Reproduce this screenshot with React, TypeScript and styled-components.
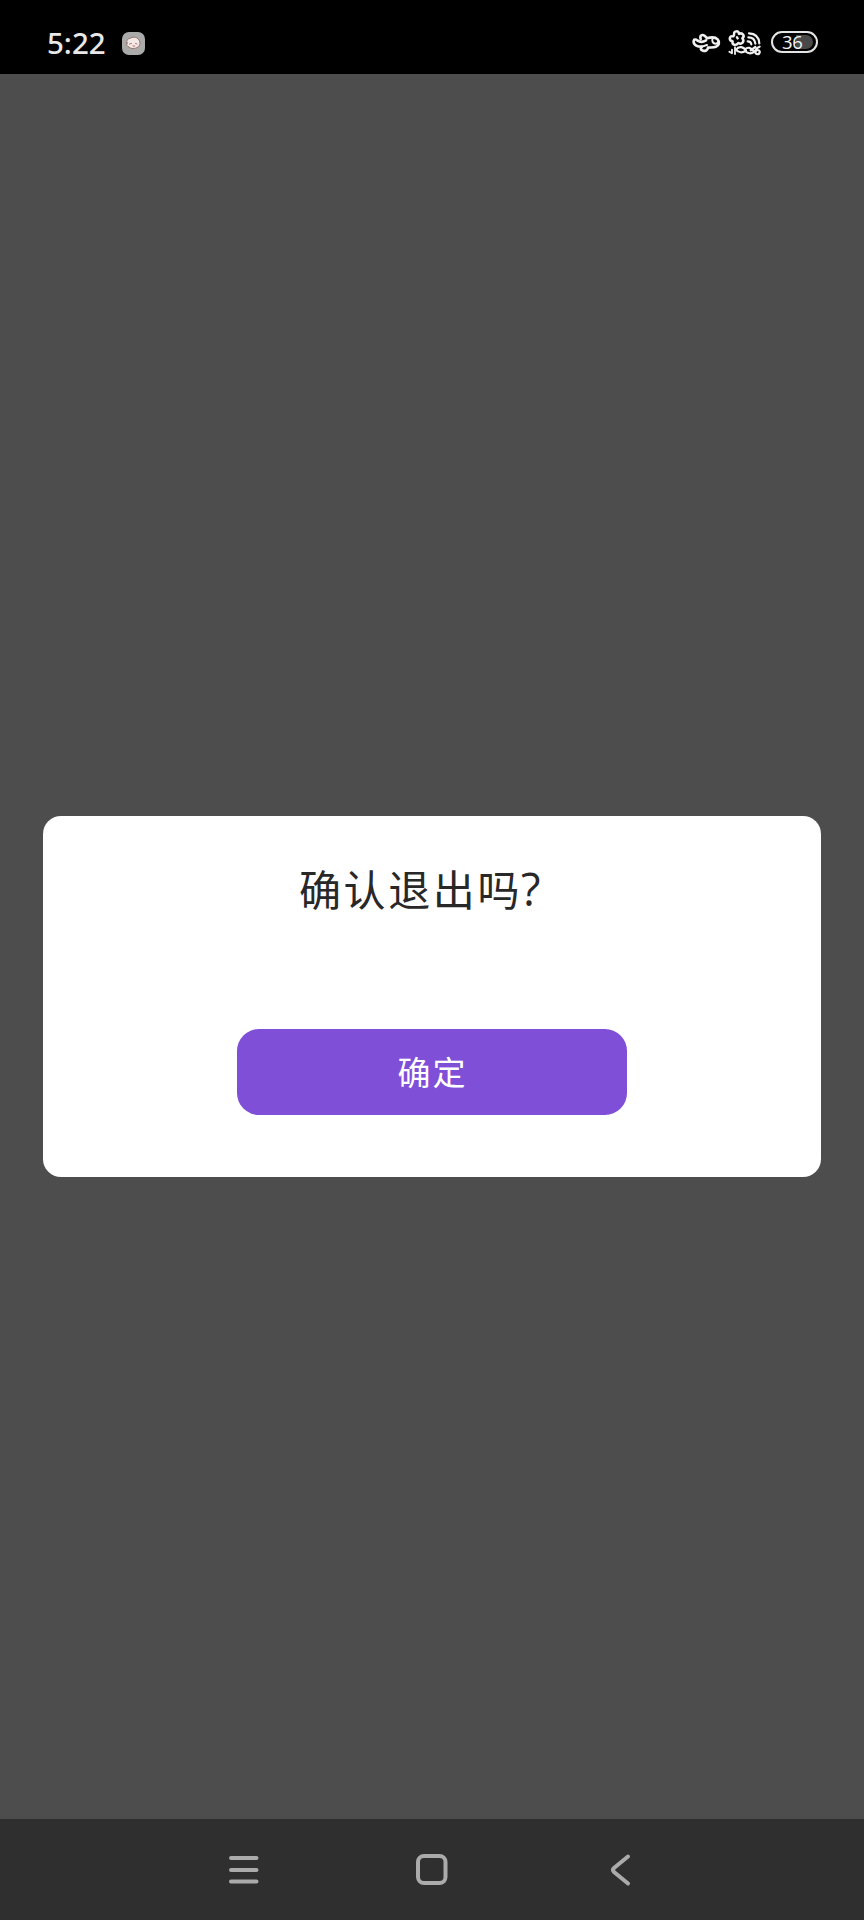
import React from "react";
import styled, { createGlobalStyle } from "styled-components";

const GlobalStyle = createGlobalStyle`
  body { margin: 0; background: #4d4d4d; }
  * { box-sizing: border-box; }
`;

const Screen = styled.div`
  width: 864px;
  height: 1920px;
  display: flex;
  flex-direction: column;
  background: #4d4d4d;
  font-family: "Noto Sans", "Noto Sans CJK SC", sans-serif;
`;

const StatusBar = styled.header`
  height: 74px;
  flex: none;
  background: #000;
  display: flex;
  align-items: center;
  padding: 12px 46px 0 47px;
`;

const Clock = styled.time`
  width: 75px;
  padding-bottom: 1px;
  font-size: 29.5px;
  font-weight: 500;
  line-height: 39px;
  color: #e8e8e8;
  white-space: nowrap;
`;

const StatusIcons = styled.div`
  margin-left: auto;
  display: flex;
  align-items: center;
  gap: 8px;
`;

const Battery = styled.div`
  width: 47px;
  height: 22px;
  margin: -2px 0 0 1px;
  border: 2px solid #e4e4e4;
  border-radius: 11px;
  padding: 2px 3px;
  display: flex;
`;

const BatteryLevel = styled.div`
  flex: 1;
  border-radius: 7px;
  background: linear-gradient(90deg, #000 55%, #484848 55%);
  padding-left: 6px;
  color: #f0f0f0;
  font-size: 18.5px;
  line-height: 14px;
  letter-spacing: -0.3px;
`;

const Content = styled.main`
  flex: 1;
  padding: 742px 43px 0;
`;

const Dialog = styled.section`
  height: 361px;
  border-radius: 18px;
  background: #fff;
  display: flex;
  flex-direction: column;
  align-items: center;
  padding-top: 42px;
`;

const Title = styled.h1`
  margin: 0;
  width: 266px;
  font-family: "Noto Sans CJK SC", sans-serif;
  font-size: 42px;
  line-height: 60px;
  font-weight: 400;
  letter-spacing: 2.6px;
  color: #282828;
  white-space: nowrap;
`;

const QuestionMark = styled.span`
  margin-left: -1px;
  font-family: "Open Sans", sans-serif;
  font-size: 45px;
  line-height: 1;
`;

const ConfirmButton = styled.button`
  width: 390px;
  height: 86px;
  margin: 111px 0 0 -1px;
  padding: 0 0 3px 2px;
  border: 0;
  border-radius: 22px;
  background: #804fd8;
  color: #fff;
  font-family: "Noto Sans CJK SC", sans-serif;
  font-size: 33px;
  line-height: 48px;
  letter-spacing: 2px;
`;

const NavBar = styled.nav`
  height: 101px;
  flex: none;
  background: #2f2f2f;
  display: flex;
  justify-content: center;
  gap: 149px;
  padding-top: 31px;
`;

const NavIcon = styled.svg`
  width: 40px;
  height: 40px;
  fill: none;
  stroke: #ababab;
  stroke-width: 4;
  stroke-linecap: round;
  stroke-linejoin: round;
`;

const Glyph = styled.svg`
  display: block;
  overflow: visible;
  fill: none;
  stroke: #f0f0f0;
  stroke-linecap: round;
  stroke-linejoin: round;
`;

const AppBadge = () => (
  <Glyph width="23" height="23" viewBox="0 0 23 23">
    <rect width="23" height="23" rx="7" fill="#aaa" stroke="none" />
    <path d="M5 11C4 9 6 6 8 6.500C10 4.500 15 5 16 7C19 9 18 14 16 15C13 17 9 17 7 15C5 14 4 13 5 11Z" fill="#f3e9e6" stroke="#94736b" strokeWidth="1" />
    <path d="M7.500 12L9.500 11.500M13.500 11.500L15 12" stroke="#905f56" strokeWidth="0.8" />
    <path d="M10 13.500H13.500L12 15Z" fill="#c86d60" stroke="none" />
  </Glyph>
);

const Airplane = () => (
  <Glyph width="28" height="22" viewBox="36 35 84 66" strokeWidth="8">
    <path d="M62 56C60 49 61 45 67 44C73 43 76 47 81 54C94 50 106 50 113 57C120 65 117 76 108 79C101 82 92 81 84 82C82 91 76 93 69 91C61 89 61 83 66 79C53 80 41 74 41 64C41 56 47 56 53 61C60 66 70 65 78 60" />
    <path d="M98 54C94 62 99 71 108 70C112 69 114 66 115 64" strokeWidth="6" />
    <path d="M66 79L81 74" strokeWidth="6" />
  </Glyph>
);

const WirelessSignals = () => (
  <Glyph width="34" height="28" viewBox="144 29 102 84" strokeWidth="7.500">
    <path d="M162 44C162 34 176 33 177 44C187 38 196 50 187 57C195 67 185 77 175 71C168 81 155 77 158 66C146 65 147 48 158 51C160 51 163 48 162 44Z" />
    <path d="M171 54L173 57" />
    <path d="M207 42Q236 43 238 72M205 54Q224 54 226 73M203 66Q213 66 214 75" strokeWidth="6.500" />
    <path d="M148 97L156 102V91M165 104V84" strokeWidth="5.500" />
    <path d="M168 91C177 79 191 82 198 94C188 101 175 101 168 91M195 90C203 82 213 84 223 97C213 105 203 102 195 95M212 93L226 83M239 82C229 85 222 97 228 103C236 109 244 97 236 93C232 91 227 94 227 98" strokeWidth="6.500" />
  </Glyph>
);

export default function App() {
  return (
    <>
      <GlobalStyle />
      <Screen>
        <StatusBar>
          <Clock>5:22</Clock>
          <AppBadge />
          <StatusIcons>
            <Airplane />
            <WirelessSignals />
            <Battery>
              <BatteryLevel>36</BatteryLevel>
            </Battery>
          </StatusIcons>
        </StatusBar>
        <Content>
          <Dialog role="dialog" aria-modal="true">
            <Title>
              确认退出吗<QuestionMark>?</QuestionMark>
            </Title>
            <ConfirmButton>确定</ConfirmButton>
          </Dialog>
        </Content>
        <NavBar>
          <NavIcon viewBox="0 0 40 40">
            <path d="M8 8H33.500M8 20H33.500M8 31.500H33.500" />
          </NavIcon>
          <NavIcon viewBox="0 0 40 40">
            <rect x="6" y="6" width="27.500" height="27" rx="6" />
          </NavIcon>
          <NavIcon viewBox="0 0 40 40">
            <path d="M27 6.500L13 18Q11 20 13 22L27 33.500" />
          </NavIcon>
        </NavBar>
      </Screen>
    </>
  );
}
